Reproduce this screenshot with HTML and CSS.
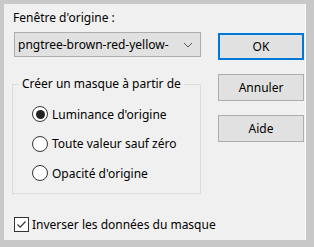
FILE: index.html
```html
<!DOCTYPE html>
<html lang="fr">
  <head>
    <title>Masque</title>
    <meta charset="UTF-8" />
    <link rel="stylesheet" href="styles.css">
  </head>
  <body>
    <div class="dialog">
      <div class="main">
        <p class="label">Fenêtre d'origine :</p>
        <div class="combo">
          <span class="combo-text">pngtree-brown-red-yellow-</span>
          <svg class="chevron" width="10" height="6" viewBox="0 0 10 6">
            <path d="M1 1 L5 5 L9 1" fill="none" stroke="#555" stroke-width="1"/>
          </svg>
        </div>

        <fieldset class="group">
          <legend>Créer un masque à partir de</legend>
          <div class="options">
            <div class="radio-row">
              <span class="radio checked"></span>
              <span>Luminance d'origine</span>
            </div>
            <div class="radio-row">
              <span class="radio"></span>
              <span>Toute valeur sauf zéro</span>
            </div>
            <div class="radio-row">
              <span class="radio"></span>
              <span>Opacité d'origine</span>
            </div>
          </div>
        </fieldset>

        <div class="check-row">
          <span class="checkbox">
            <svg width="13" height="13" viewBox="0 0 13 13">
              <path d="M2.5 6.5 L5.2 9.2 L10.5 3.5" fill="none" stroke="#333" stroke-width="1.2"/>
            </svg>
          </span>
          <span>Inverser les données du masque</span>
        </div>
      </div>

      <div class="side">
        <button class="btn default">OK</button>
        <button class="btn">Annuler</button>
        <button class="btn">Aide</button>
      </div>
    </div>
  </body>
</html>
```

FILE: styles.css
```css
* {
  margin: 0;
  padding: 0;
  box-sizing: border-box;
}

body {
  font-family: 'Noto Sans', 'Open Sans', sans-serif;
  font-size: 12px;
  color: #000;
  background: #c8c8c8;
  width: 314px;
  height: 247px;
  overflow: hidden;
  white-space: nowrap;
}

.dialog {
  margin: 4px 0 0 4px;
  width: 302px;
  height: 236px;
  background: #f0f0f0;
  border-right: 1px solid #fbfbfb;
  display: flex;
  padding: 0 0 0 8px;
}

.main {
  width: 189px;
  flex-shrink: 0;
  display: flex;
  flex-direction: column;
}

.label {
  line-height: 16px;
  margin-top: 6px;
  padding-left: 1px;
}

.combo {
  margin-top: 6px;
  margin-left: 2px;
  width: 187px;
  height: 25px;
  background: #e1e1e1;
  border: 1px solid #adadad;
  display: flex;
  align-items: center;
  justify-content: space-between;
  padding: 0 7px 0 3px;
}

.combo-text {
  line-height: 16px;
}

/* Group box */
.group {
  margin-top: 19px;
  width: 189px;
  min-width: 0;
  height: 118px;
  border: 1px solid #dcdcdc;
}

.group legend {
  margin-left: 6px;
  padding: 0 3px;
  line-height: 16px;
}

.options {
  padding: 14px 0 0 19px;
  display: flex;
  flex-direction: column;
  gap: 13.5px;
}

.radio-row {
  display: flex;
  align-items: center;
  gap: 4px;
  height: 16px;
}

.radio {
  width: 16px;
  height: 16px;
  border: 1px solid #333;
  border-radius: 50%;
  background: #fff;
  display: flex;
  align-items: center;
  justify-content: center;
}

.radio.checked::before {
  content: '';
  width: 9px;
  height: 9px;
  border-radius: 50%;
  background: #222;
}

.check-row {
  margin-top: 22px;
  margin-left: 2px;
  display: flex;
  align-items: center;
  gap: 3px;
}

.checkbox {
  width: 15px;
  height: 15px;
  border: 1px solid #333;
  background: #fff;
  display: flex;
  align-items: center;
  justify-content: center;
}

.checkbox svg {
  display: block;
}

/* Buttons */
.side {
  margin-left: 17px;
  padding-top: 29px;
  display: flex;
  flex-direction: column;
  gap: 14px;
}

.btn {
  width: 86px;
  height: 27px;
  background: #e1e1e1;
  border: 1px solid #adadad;
  font-family: inherit;
  font-size: 12px;
  color: #000;
}

.btn.default {
  border: 2px solid #0078d7;
}
```
